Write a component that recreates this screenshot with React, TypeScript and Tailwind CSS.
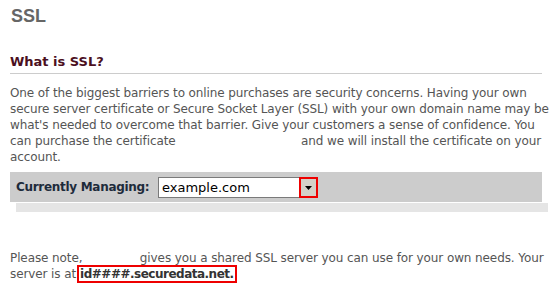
export default function App() {
  return (
    <div className="w-[554px] h-[291px] overflow-hidden bg-white px-[10px] font-['DejaVu_Sans',Verdana,sans-serif]">
      {/* Page title */}
      <h1 className="pt-[5px] text-[18px] leading-[22px] font-bold text-[#666666] font-['Liberation_Sans',Arial,sans-serif] pl-px">
        SSL
      </h1>

      <div className="w-[532px]">
        <h2 className="mt-[27px] pb-[3px] border-b border-[#cccccc] text-[13px] leading-4 font-bold text-[#4b0f1e]">
          What is SSL?
        </h2>

        <p className="mt-[11px] whitespace-nowrap text-[12px] leading-4 tracking-[-0.1px] text-[#555555]">
          One of the biggest barriers to online purchases are security concerns. Having your own
          <br />
          secure server certificate or Secure Socket Layer (SSL) with your own domain name may be
          <br />
          what's needed to overcome that barrier. Give your customers a sense of confidence. You
          <br />
          can purchase the certificate <span className="inline-block w-[118px]" /> and we will install the
          certificate on your
          <br />
          account.
        </p>

        {/* Domain picker */}
        <div className="mt-[7px] h-[30px] bg-[#cccccc] flex items-center pl-[6px]">
          <span className="text-[12px] font-bold tracking-[-0.3px] text-[#1d2b3b] w-[142px]">Currently Managing:</span>
          <div className="flex h-[21px] mt-px">
            <div className="w-[141px] bg-white border border-[#7a7a7a] border-r-0 pl-[3px] text-[13px] leading-[19px] text-black">
              example.com
            </div>
            <div className="w-[19px] h-[21px] border-2 border-[#ee0000] bg-[#d4d0c8] flex items-center justify-center">
              <svg width="7" height="4" viewBox="0 0 7 4">
                <path d="M0 0h7L3.5 4z" fill="#000" />
              </svg>
            </div>
          </div>
        </div>
        <div className="mt-px ml-[6px] w-[532px] h-[9px] bg-[#e5e5e5]" />

        <p className="mt-[38px] whitespace-nowrap text-[12px] leading-4 tracking-[-0.1px] text-[#555555]">
          Please note, <span className="inline-block w-[50px]" /> gives you a shared SSL server you can use for
          your own needs. Your
          <br />
          server is at
          <span className="ml-px border-2 border-[#ee0000] px-px font-bold tracking-[-0.5px] text-[#333333]">
            id####.securedata.net.
          </span>
        </p>
      </div>
    </div>
  )
}
